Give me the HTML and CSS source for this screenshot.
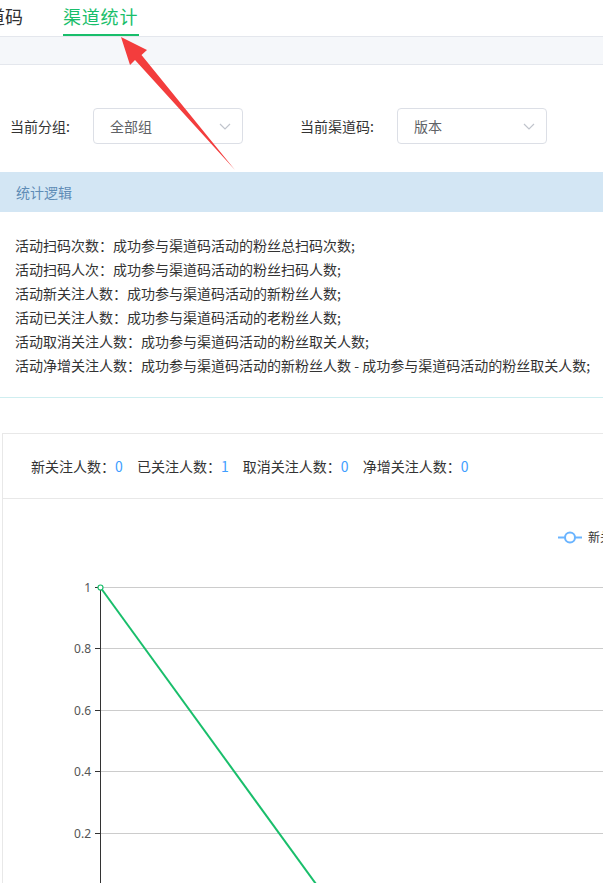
FILE: index.html
```html
<!DOCTYPE html>
<html lang="zh-CN">
<head>
<meta charset="utf-8">
<title>渠道统计</title>
<link rel="stylesheet" href="styles.css">
</head>
<body>
<div class="page">
  <div class="tabs">
    <div class="tab">渠道码</div>
    <div class="tab active">渠道统计</div>
  </div>
  <div class="band"></div>

  <div class="filters">
    <div class="label l1">当前分组:</div>
    <div class="select s1"><span>全部组</span>
      <svg class="chev" width="12" height="7" viewBox="0 0 12 7"><path d="M1 1 L6 6 L11 1" fill="none" stroke="#c0c4cc" stroke-width="1.2"/></svg>
    </div>
    <div class="label l2">当前渠道码:</div>
    <div class="select"><span>版本</span>
      <svg class="chev" width="12" height="7" viewBox="0 0 12 7"><path d="M1 1 L6 6 L11 1" fill="none" stroke="#c0c4cc" stroke-width="1.2"/></svg>
    </div>
  </div>

  <div class="banner">统计逻辑</div>

  <div class="logic">
    <p>活动扫码次数：成功参与渠道码活动的粉丝总扫码次数;</p>
    <p>活动扫码人次：成功参与渠道码活动的粉丝扫码人数;</p>
    <p>活动新关注人数：成功参与渠道码活动的新粉丝人数;</p>
    <p>活动已关注人数：成功参与渠道码活动的老粉丝人数;</p>
    <p>活动取消关注人数：成功参与渠道码活动的粉丝取关人数;</p>
    <p>活动净增关注人数：成功参与渠道码活动的新粉丝人数 - 成功参与渠道码活动的粉丝取关人数;</p>
  </div>

  <div class="card">
    <div class="stats">
      <span class="stat">新关注人数：<b>0</b></span>
      <span class="stat">已关注人数：<b>1</b></span>
      <span class="stat">取消关注人数：<b>0</b></span>
      <span class="stat">净增关注人数：<b>0</b></span>
    </div>
    <svg class="chart" width="700" height="400" viewBox="0 0 700 400">
      <g stroke="#cccccc" stroke-width="1">
        <line x1="97" y1="88.5" x2="700" y2="88.5"/>
        <line x1="97" y1="149.5" x2="700" y2="149.5"/>
        <line x1="97" y1="211.5" x2="700" y2="211.5"/>
        <line x1="97" y1="272.5" x2="700" y2="272.5"/>
        <line x1="97" y1="334.5" x2="700" y2="334.5"/>
      </g>
      <g stroke="#333" stroke-width="1">
        <line x1="97.5" y1="88" x2="97.5" y2="400"/>
        <line x1="92" y1="88.5" x2="97" y2="88.5"/>
        <line x1="92" y1="149.5" x2="97" y2="149.5"/>
        <line x1="92" y1="211.5" x2="97" y2="211.5"/>
        <line x1="92" y1="272.5" x2="97" y2="272.5"/>
        <line x1="92" y1="334.5" x2="97" y2="334.5"/>
      </g>
      <g class="ylab" text-anchor="end">
        <text x="88" y="93">1</text>
        <text x="88" y="154">0.8</text>
        <text x="88" y="216">0.6</text>
        <text x="88" y="277">0.4</text>
        <text x="88" y="339">0.2</text>
      </g>
      <line x1="97.5" y1="88.5" x2="321" y2="396" stroke="#19be6b" stroke-width="2"/>
      <circle cx="97.5" cy="88.5" r="2.5" fill="#fff" stroke="#19be6b" stroke-width="1.2"/>
      <line x1="555" y1="38.5" x2="579" y2="38.5" stroke="#6ab4ff" stroke-width="2"/>
      <circle cx="567" cy="38.5" r="5" fill="#fff" stroke="#6ab4ff" stroke-width="2"/>
      <text class="legend" x="585" y="43">新关注人数</text>
    </svg>
  </div>

  <svg class="arrow" width="603" height="200" viewBox="0 0 603 200">
    <polygon points="121,37 147,50 141.5,55 235,170 135,60 130,65" fill="#f33d3d"/>
  </svg>
</div>
</body>
</html>
```

FILE: styles.css
```css
html, body {
  margin: 0;
  padding: 0;
  overflow: hidden;
  background: #fff;
}
body {
  font-family: "Noto Sans CJK SC", "Noto Sans", sans-serif;
  color: #333;
}
.page {
  position: relative;
  width: 603px;
  height: 883px;
  overflow: hidden;
}
.tabs {
  display: flex;
  height: 36px;
  border-bottom: 1px solid #e4e7ed;
  margin-left: -31px;
  gap: 40px;
}
.tab {
  height: 36px;
  box-sizing: border-box;
  font-size: 18px;
  line-height: 32px;
  color: #303133;
  white-space: nowrap;
}
.tab.active {
  color: #19be6b;
  border-bottom: 2px solid #19be6b;
  letter-spacing: 0.8px;
  padding-right: 1px;
}
.band {
  height: 27px;
  background: #f5f7fa;
  border-bottom: 1px solid #e4e7ed;
}
.filters {
  display: flex;
  align-items: center;
  padding: 43px 0 0 10px;
  height: 36px;
}
.label {
  font-size: 14px;
  color: #333;
  white-space: nowrap;
}
.l1 { width: 83px; }
.l2 { width: 97px; }
.s1 { margin-right: 57px; }
.select {
  width: 150px;
  height: 36px;
  box-sizing: border-box;
  border: 1px solid #dcdfe6;
  border-radius: 4px;
  display: flex;
  align-items: center;
  justify-content: space-between;
  padding: 0 11px 0 16px;
  font-size: 14px;
  color: #606266;
}
.chev { display: block; }
.banner {
  margin-top: 28px;
  height: 40px;
  line-height: 40px;
  background: #d3e6f4;
  color: #5f8cb6;
  font-size: 14px;
  padding-left: 16px;
}
.logic {
  padding: 21px 15px 20px 15px;
  border-bottom: 1px solid #cfeef0;
}
.logic p {
  margin: 0;
  font-size: 14px;
  line-height: 24px;
  color: #333;
  white-space: nowrap;
}
.card {
  margin: 35px 0 0 2px;
  width: 700px;
  border: 1px solid #e8e8e8;
}
.stats {
  height: 64px;
  line-height: 64px;
  padding-left: 28px;
  border-bottom: 1px solid #e8e8e8;
  font-size: 14px;
  color: #333;
  white-space: nowrap;
}
.stat { margin-right: 11px; }
.stat b {
  font-weight: normal;
  color: #409eff;
}
.chart { display: block; }
.ylab text {
  font-family: "Noto Sans", sans-serif;
  font-size: 12px;
  fill: #555;
}
.legend {
  font-size: 12px;
  fill: #333;
}
.arrow {
  position: absolute;
  left: 0;
  top: 0;
  pointer-events: none;
}
```
